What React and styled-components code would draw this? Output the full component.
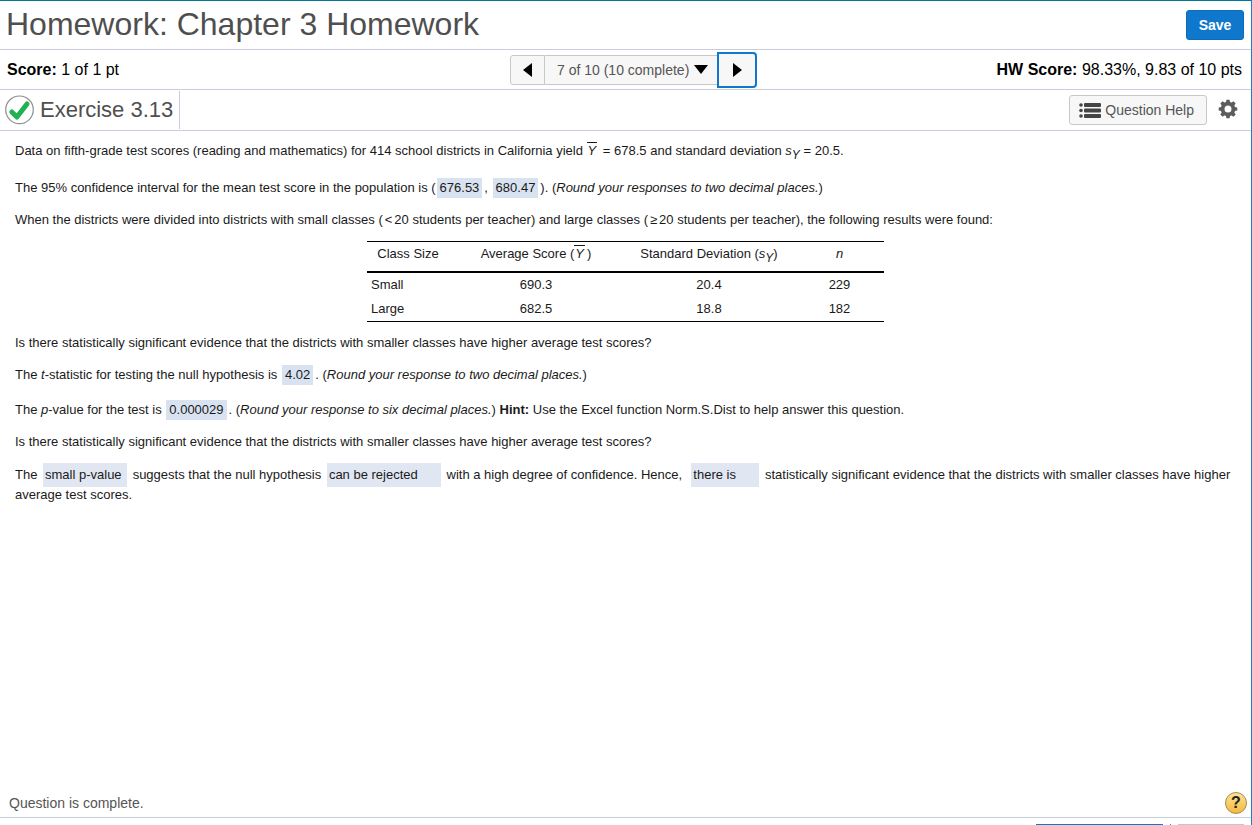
import React from "react";
import styled, { createGlobalStyle } from "styled-components";

const GlobalStyle = createGlobalStyle`
  *, *::before, *::after { box-sizing: border-box; }
  body {
    margin: 0;
    background: #fff;
    color: #000;
    font-family: Arial, "Liberation Sans", sans-serif;
    font-size: 13px;
    line-height: 20px;
  }
  button, select { font-family: inherit; }
`;

const line = "#c8ccdb";

const Page = styled.div`
  display: flex;
  flex-direction: column;
  min-height: 100vh;
  border-top: 1px solid #00789c;
  border-right: 1px solid #2380c4;
`;

const Bar = styled.div`
  display: flex;
  align-items: center;
  justify-content: space-between;
  height: ${(p) => p.$height}px;
  padding: 0 ${(p) => p.$right || 7}px 0 ${(p) => p.$left || 7}px;
  border-bottom: 1px solid ${line};
`;

const Title = styled.h1`
  margin: 0;
  padding-bottom: 2px;
  color: #4f4f4f;
  font-size: 32px;
  font-weight: 400;
  line-height: 36px;
`;

const SaveButton = styled.button`
  height: 30px;
  width: 58px;
  padding: 0;
  border: 1px solid #0b6cbc;
  border-radius: 3px;
  background: #0f78cc;
  color: #fff;
  font-size: 14px;
  font-weight: 700;
`;

const ScoreBar = styled(Bar)`
  display: grid;
  grid-template-columns: 1fr auto 1fr;
`;

const Score = styled.div`
  font-size: 16px;
  text-align: ${(p) => p.$align || "left"};
`;

const Pager = styled.nav`
  display: flex;
  align-items: center;
  margin-left: 18px;
`;

const PrevButton = styled.button`
  display: flex;
  align-items: center;
  justify-content: center;
  width: 35px;
  height: 30px;
  padding: 0;
  border: 1px solid #c8c8c8;
  border-radius: 3px 0 0 3px;
  background: #f7f7f7;
`;

const NextButton = styled(PrevButton)`
  width: 40px;
  height: 36px;
  border: 2px solid #0f78cc;
  border-radius: 0 4px 4px 0;
`;

const QuestionPicker = styled.label`
  display: flex;
  align-items: center;
  height: 30px;
  padding: 0 9px 0 12px;
  border: solid #c8c8c8;
  border-width: 1px 0;
  background: #f7f7f7;
`;

const PickerSelect = styled.select`
  appearance: none;
  margin: 0;
  padding: 0 4px 0 0;
  border: 0;
  background: transparent;
  color: #555;
  font-size: 14px;
  line-height: 20px;
`;

const Exercise = styled.div`
  display: flex;
  align-items: center;
  gap: 6px;
  height: 38px;
  padding-right: 6px;
  border-right: 1px solid ${line};
`;

const ExerciseTitle = styled.h2`
  margin: 0;
  color: #4f4f4f;
  font-size: 22px;
  font-weight: 400;
  line-height: 26px;
`;

const Tools = styled.div`
  display: flex;
  align-items: center;
  gap: 11px;
`;

const HelpButton = styled.button`
  display: flex;
  align-items: center;
  gap: 4px;
  height: 30px;
  padding: 0 12px 0 9px;
  border: 1px solid #c8c8c8;
  border-radius: 3px;
  background: #f7f7f7;
  color: #555;
  font-size: 14px;
`;

const IconButton = styled.button`
  display: flex;
  padding: 0 0 2px;
  border: 0;
  background: transparent;
`;

const Content = styled.main`
  flex: 1;
  padding: 10px 15px;
  color: #1a1a1a;
`;

const Text = styled.p`
  margin: 0 0 ${(p) => p.$gap || 12}px;
`;

const Answer = styled.span`
  display: inline-block;
  padding: 0 3px;
  margin: 0 2px 0 1px;
  background: #d9e2f1;
`;

const Choice = styled.span`
  display: inline-block;
  width: ${(p) => p.$width}px;
  padding: 2px;
  margin: -2px 2px;
  background: #e1e7f2;
`;

const Mean = styled.i`
  display: inline-block;
  padding: 0 1px;
  border-top: 1px solid #1a1a1a;
  line-height: 16px;
  margin-right: 2px;
`;

const Sub = styled.sub`
  font-size: 12px;
  line-height: 0;
  vertical-align: -4px;
`;

const Operator = styled.span`
  margin: 0 2px;
`;

const Results = styled.table`
  margin: 0 auto 11px;
  border-collapse: collapse;
  border-top: 1px solid #000;
  border-bottom: 1px solid #000;
  table-layout: fixed;

  th, td { padding: 2px 0; text-align: center; font-weight: 400; }
  thead th { height: 30px; padding: 2px 0 7px; border-bottom: 2px solid #000; }
  tbody th { padding-left: 4px; text-align: left; }
`;

const Column = styled.col`
  width: ${(p) => p.$width}px;
`;

const Status = styled.div`
  display: flex;
  align-items: center;
  justify-content: space-between;
  height: 30px;
  padding: 0 4px 0 9px;
  border-bottom: 1px solid ${line};
  color: #555;
  font-size: 14px;
`;

const Footer = styled.footer`
  display: flex;
  justify-content: flex-end;
  align-items: flex-end;
  gap: 7px;
  height: 7px;
  padding-right: 7px;
`;

const FooterEdge = styled.div`
  width: ${(p) => p.$width}px;
  height: 1px;
  background: ${(p) => p.$color};
`;

const Triangle = ({ points, width, height }) => (
  <svg width={width} height={height} viewBox={`0 0 ${width} ${height}`} aria-hidden="true">
    <polygon points={points} fill="#000" />
  </svg>
);

const CheckIcon = () => (
  <svg width="29" height="30" viewBox="0 0 29 30" aria-hidden="true">
    <circle cx="14.5" cy="14.8" r="13.8" fill="#fff" stroke="#909090" strokeWidth="1.2" />
    <path d="M6.8 17 11.9 22 22 9" fill="none" stroke="#20b150" strokeWidth="5" strokeLinecap="round" strokeLinejoin="round" />
  </svg>
);

const ListIcon = () => (
  <svg width="22" height="16" viewBox="0 0 22 16" fill="#444" aria-hidden="true">
    {[3, 8.5, 14].map((y) => (
      <g key={y}>
        <circle cx="2" cy={y} r="1.8" />
        <rect x="5" y={y - 2} width="17" height="4" rx="1" />
      </g>
    ))}
  </svg>
);

const GearIcon = () => (
  <svg width="20" height="20" viewBox="0 0 20 20" fill="#5c5c5c" aria-hidden="true">
    {[0, 45, 90, 135, 180, 225, 270, 315].map((a) => (
      <path key={a} d="M7.7 5 8.4.7h3.2l.7 4.3z" transform={`rotate(${a} 10 10)`} />
    ))}
    <circle cx="10" cy="10" r="5.4" fill="none" stroke="#5c5c5c" strokeWidth="3.8" />
  </svg>
);

const HelpBadge = styled.button`
  width: 22px;
  height: 22px;
  padding: 0;
  border: 1px solid #a18b5c;
  border-radius: 50%;
  background: linear-gradient(#ffe394, #f5b93a);
  color: #222;
  font-size: 16px;
  font-weight: 700;
  line-height: 20px;
`;

export default function App() {
  return (
    <>
      <GlobalStyle />
      <Page>
        <Bar as="header" $height={49} $left={6}>
          <Title>Homework: Chapter 3 Homework</Title>
          <SaveButton type="button">Save</SaveButton>
        </Bar>

        <ScoreBar $height={40} $right={9}>
          <Score><b>Score:</b> 1 of 1 pt</Score>
          <Pager aria-label="Questions">
            <PrevButton type="button" aria-label="Previous question">
              <Triangle width={9} height={14} points="9,0 9,14 0,7" />
            </PrevButton>
            <QuestionPicker>
              <PickerSelect aria-label="Question">
                <option>7 of 10 (10 complete)</option>
              </PickerSelect>
              <Triangle width={14} height={9} points="0,0 14,0 7,9" />
            </QuestionPicker>
            <NextButton type="button" aria-label="Next question">
              <Triangle width={9} height={14} points="0,0 9,7 0,14" />
            </NextButton>
          </Pager>
          <Score $align="right"><b>HW Score:</b> 98.33%, 9.83 of 10 pts</Score>
        </ScoreBar>

        <Bar $height={41} $left={5} $right={13}>
          <Exercise>
            <CheckIcon />
            <ExerciseTitle>Exercise 3.13</ExerciseTitle>
          </Exercise>
          <Tools>
            <HelpButton type="button"><ListIcon />Question Help</HelpButton>
            <IconButton type="button" aria-label="Settings"><GearIcon /></IconButton>
          </Tools>
        </Bar>

        <Content>
          <Text $gap={17}>
            Data on fifth-grade test scores (reading and mathematics) for 414 school districts in California yield{" "}
            <Mean>Y</Mean> = 678.5 and standard deviation <i>s<Sub>Y</Sub></i> = 20.5.
          </Text>
          <Text>
            The 95% confidence interval for the mean test score in the population is (<Answer>676.53</Answer>,{" "}
            <Answer>680.47</Answer>). (<i>Round your responses to two decimal places.</i>)
          </Text>
          <Text $gap={11}>
            When the districts were divided into districts with small classes (<Operator>&lt;</Operator>20 students per
            teacher) and large classes (<Operator>≥</Operator>20 students per teacher), the following results were found:
          </Text>
          <Results>
            <colgroup>
              <Column $width={82} />
              <Column $width={174} />
              <Column $width={172} />
              <Column $width={89} />
            </colgroup>
            <thead>
              <tr>
                <th scope="col">Class Size</th>
                <th scope="col">Average Score (<Mean>Y</Mean>)</th>
                <th scope="col">Standard Deviation (<i>s<Sub>Y</Sub></i>)</th>
                <th scope="col"><i>n</i></th>
              </tr>
            </thead>
            <tbody>
              <tr><th scope="row">Small</th><td>690.3</td><td>20.4</td><td>229</td></tr>
              <tr><th scope="row">Large</th><td>682.5</td><td>18.8</td><td>182</td></tr>
            </tbody>
          </Results>
          <Text>
            Is there statistically significant evidence that the districts with smaller classes have higher average test scores?
          </Text>
          <Text $gap={15}>
            The <i>t</i>-statistic for testing the null hypothesis is <Answer>4.02</Answer>. (<i>Round your response to two
            decimal places.</i>)
          </Text>
          <Text>
            The <i>p</i>-value for the test is <Answer>0.000029</Answer>. (<i>Round your response to six decimal places.</i>){" "}
            <b>Hint:</b> Use the Excel function Norm.S.Dist to help answer this question.
          </Text>
          <Text $gap={13}>
            Is there statistically significant evidence that the districts with smaller classes have higher average test scores?
          </Text>
          <Text>
            The <Choice $width={84}>small p-value</Choice> suggests that the null hypothesis{" "}
            <Choice $width={114}>can be rejected</Choice> with a high degree of confidence. Hence,&nbsp;{" "}
            <Choice $width={68}>there is</Choice> statistically significant evidence that the districts with smaller
            classes have higher average test scores.
          </Text>
        </Content>

        <Status>
          <span>Question is complete.</span>
          <HelpBadge type="button" aria-label="Help">?</HelpBadge>
        </Status>
        <Footer>
          <FooterEdge $width={127} $color="#0f78cc" />
          <FooterEdge $width={1} $color="#777" />
          <FooterEdge $width={66} $color="#c8c8c8" />
        </Footer>
      </Page>
    </>
  );
}
